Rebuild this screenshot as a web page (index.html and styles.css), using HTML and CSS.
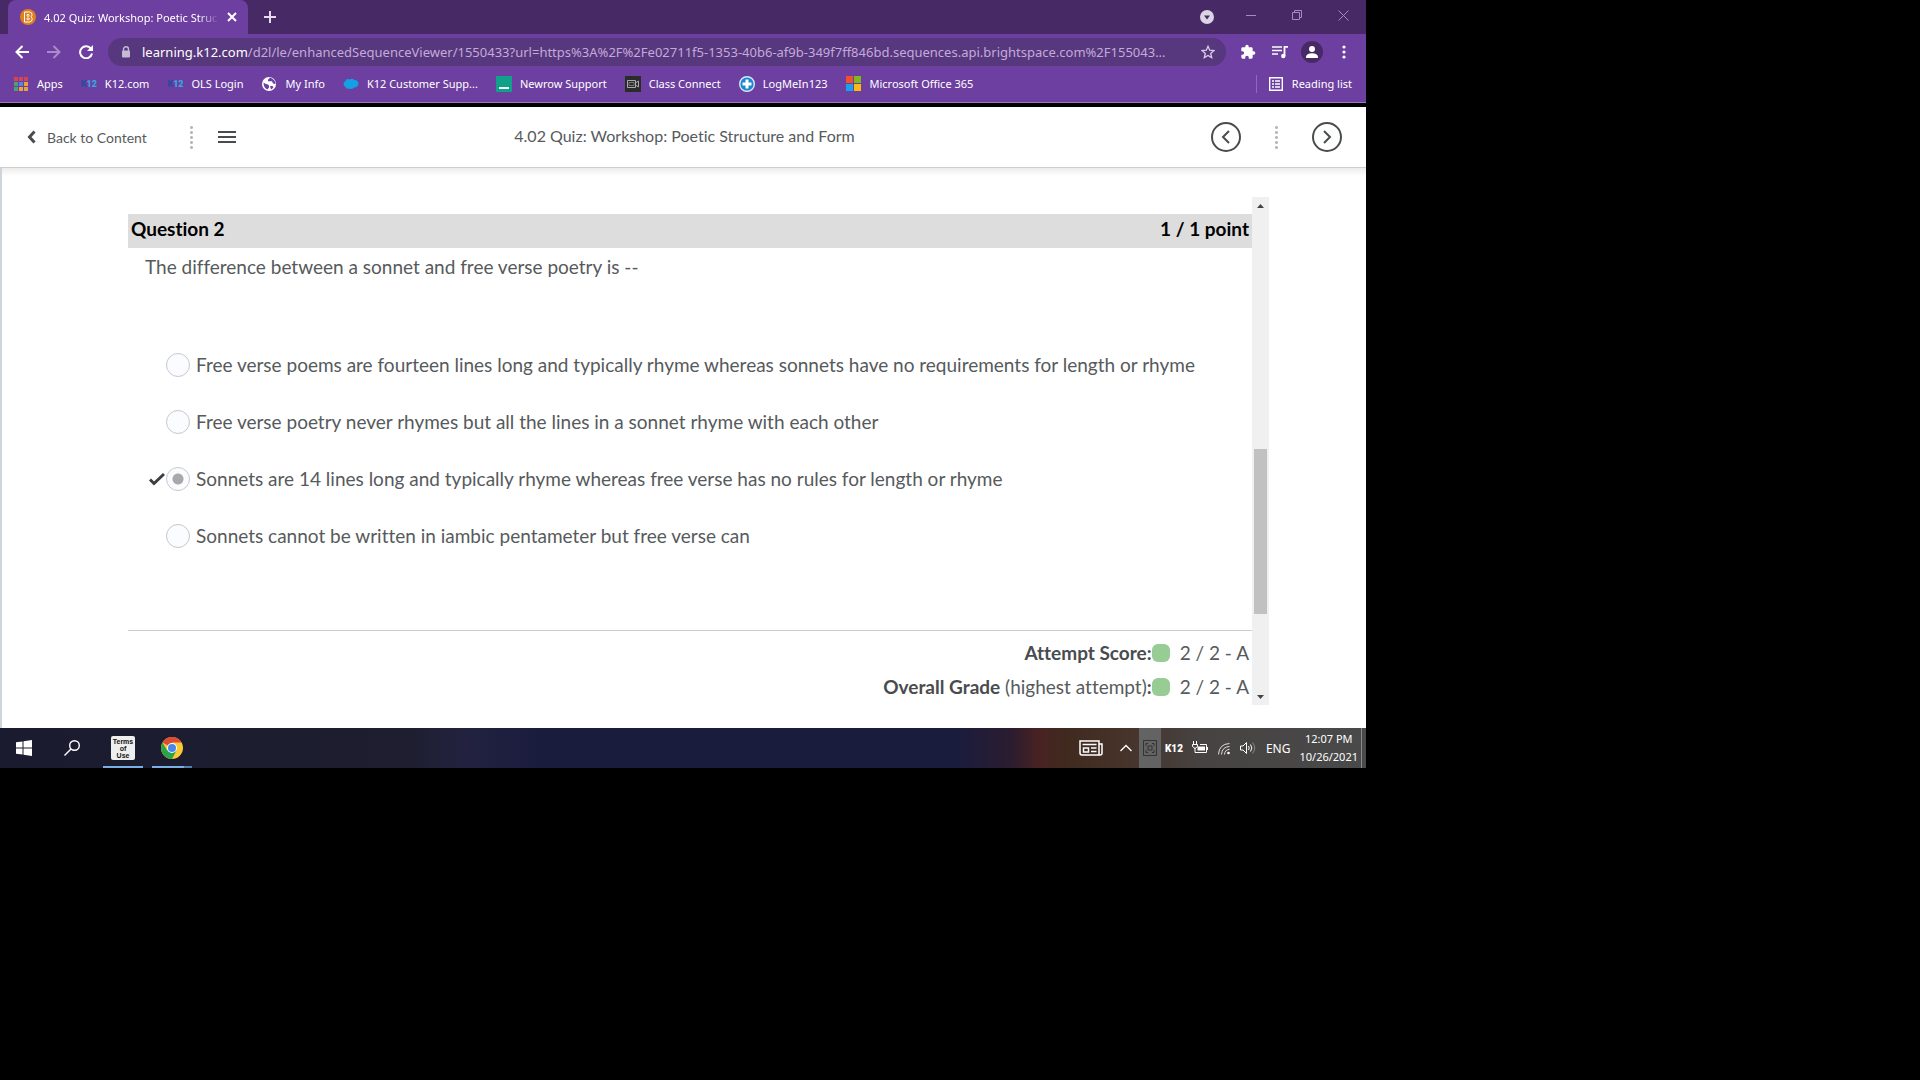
FILE: index.html
```html
<!DOCTYPE html>
<html lang="en">
<head>
  <meta charset="UTF-8">
  <meta name="viewport" content="width=device-width, initial-scale=1.0">
  <title>4.02 Quiz: Workshop: Poetic Structure and Form</title>
  <link rel="stylesheet" href="styles.css">
</head>
<body>
<div class="desktop">

  <!-- Browser chrome -->
  <div class="tabstrip">
    <div class="tab">
      <svg class="icon16" viewBox="0 0 16 16"><circle cx="8" cy="8" r="8" fill="#de801c"/><path d="M4.500 3h5q2.500.3 2.500 2.600 0 1.400-1 2.200 1.200.8 1.200 2.400-.2 2.500-2.700 2.800h-5z" fill="none" stroke="#fff"/><path d="M7 5.500h2v1.700H7zM7 9h2.200v1.700H7z" fill="none" stroke="#fff" stroke-width=".8"/></svg>
      <span class="tab-title">4.02 Quiz: Workshop: Poetic Struc</span>
      <button class="plain" aria-label="Close tab"><svg width="10" height="10" viewBox="0 0 10 10"><path d="M1 1l8 8M9 1L1 9" stroke="#fff" stroke-width="2"/></svg></button>
    </div>
    <button class="plain new-tab" aria-label="New tab"><svg width="12" height="12" viewBox="0 0 12 12"><path d="M6 0v12M0 6h12" stroke="#e5dcf0" stroke-width="2"/></svg></button>
    <div class="window-buttons">
      <button class="plain" aria-label="Search tabs"><svg width="14" height="14" viewBox="0 0 14 14"><circle cx="7" cy="7" r="7" fill="#dcd4e4"/><path d="M4 5.500h6L7 9.500z" fill="#472a65"/></svg></button>
      <button class="plain" aria-label="Minimize"><svg width="10" height="10" viewBox="0 0 10 10"><path d="M0 5.500h10" stroke="#a58bbf"/></svg></button>
      <button class="plain" aria-label="Restore"><svg width="10" height="10" viewBox="0 0 10 10"><path d="M.5 2.500h7v7h-7zM2.500 2.500v-2h7v7h-2" fill="none" stroke="#a58bbf"/></svg></button>
      <button class="plain" aria-label="Close"><svg width="11" height="11" viewBox="0 0 11 11"><path d="M.5.5l10 10M10.500.5l-10 10" stroke="#a58bbf"/></svg></button>
    </div>
  </div>

  <div class="toolbar">
    <button class="plain nav" aria-label="Back"><svg width="14" height="14" viewBox="0 0 14 14"><path d="M14 7H1.500M7.500 1L1.500 7l6 6" fill="none" stroke="#fff" stroke-width="2"/></svg></button>
    <button class="plain nav" aria-label="Forward"><svg width="14" height="14" viewBox="0 0 14 14"><path d="M0 7h12.500M6.500 1l6 6-6 6" fill="none" stroke="#a98acb" stroke-width="2"/></svg></button>
    <button class="plain nav" aria-label="Reload"><svg width="14" height="14" viewBox="0 0 14 14"><path d="M12 3.800A6 6 0 1 0 13 8.500" fill="none" stroke="#fff" stroke-width="2"/><path d="M14 0v6H8z" fill="#fff"/></svg></button>
    <div class="omnibox">
      <svg width="10" height="12" viewBox="0 0 10 12"><path d="M2.500 5V3.300a2.500 2.500 0 0 1 5 0V5" fill="none" stroke="#c6b9d4" stroke-width="1.400"/><rect x="1" y="4.500" width="8" height="7" rx="1" fill="#c6b9d4"/></svg>
      <span class="url"><b>learning.k12.com</b>/d2l/le/enhancedSequenceViewer/1550433?url=https%3A%2F%2Fe02711f5-1353-40b6-af9b-349f7ff846bd.sequences.api.brightspace.com%2F155043...</span>
      <button class="plain" aria-label="Bookmark this tab"><svg width="14" height="14" viewBox="0 0 14 14"><path d="M7 1.300l1.700 3.900 4.200.4-3.200 2.800 1 4.200L7 10.400l-3.700 2.200 1-4.200L1.100 5.600l4.200-.4z" fill="none" stroke="#d9cce6" stroke-width="1.300"/></svg></button>
    </div>
    <div class="actions">
      <button class="plain" aria-label="Extensions"><svg class="icon16" viewBox="0 0 24 24"><path fill="#fff" d="M20.500 11H19V7c0-1.100-.9-2-2-2h-4V3.500a2.500 2.500 0 0 0-5 0V5H4c-1.100 0-2 .9-2 2v3.800h1.500a2.700 2.700 0 0 1 0 5.400H2V20c0 1.100.9 2 2 2h3.800v-1.500a2.700 2.700 0 0 1 5.400 0V22H17c1.100 0 2-.9 2-2v-4h1.500a2.500 2.500 0 0 0 0-5z"/></svg></button>
      <button class="plain" aria-label="Media"><svg class="icon16" viewBox="0 0 16 16"><path d="M0 3h10M0 6.500h10M0 10h6" stroke="#fff" stroke-width="1.600"/><path d="M12.500 12V2.800H16" fill="none" stroke="#fff" stroke-width="1.800"/><circle cx="11.300" cy="12" r="2.200" fill="#fff"/></svg></button>
      <button class="plain" aria-label="Profile"><svg width="22" height="22" viewBox="0 0 22 22"><circle cx="11" cy="11" r="11" fill="#472a65"/><circle cx="11" cy="8" r="3" fill="#fff"/><path d="M5 17v-1.500Q5.500 12.500 11 12.300q5.500.2 6 3.200V17z" fill="#fff"/></svg></button>
      <button class="plain" aria-label="Menu"><svg width="4" height="14" viewBox="0 0 4 14"><circle cx="2" cy="2" r="1.600" fill="#fff"/><circle cx="2" cy="7" r="1.600" fill="#fff"/><circle cx="2" cy="12" r="1.600" fill="#fff"/></svg></button>
    </div>
  </div>

  <nav class="bookmarks">
    <a href="#"><svg class="icon16" viewBox="0 0 16 16"><path d="M1 1h4v4H1zM6 1h4v4H6zM11 1h4v4h-4z" fill="#d9434f"/><path d="M1 6h4v4H1z" fill="#4fa06c"/><path d="M6 6h4v4H6z" fill="#4a88e8"/><path d="M11 6h4v4h-4zM6 11h4v4H6zM11 11h4v4h-4z" fill="#e6a23c"/><path d="M1 11h4v4H1z" fill="#4fa06c"/><path d="M5.500 0v16M10.500 0v16M0 5.500h16M0 10.500h16" stroke="#6d3fa0"/></svg>Apps</a>
    <a href="#"><span class="k12-logo"><i>K</i>12</span>K12.com</a>
    <a href="#"><span class="k12-logo"><i>K</i>12</span>OLS Login</a>
    <a href="#"><svg class="icon16" viewBox="0 0 16 16"><circle cx="8" cy="8" r="7" fill="#fff"/><path d="M2.500 6.500q2 2 4 1.800l1.500 1.200v2l-1.500 2q-4-1.500-4-7zM9 1.500L7 3.700v1.500h4l1 2.300 2.500.5q0-4.500-5.500-6.500zM9 10h2.500l1 1.200q-1 1.500-2.500 2.300z" fill="#6d3fa0"/></svg>My Info</a>
    <a href="#"><svg class="icon16" viewBox="0 0 16 16"><path d="M2 5.500Q3.500 2 7 3.500 9.500 2 11 4q4-.5 4.500 3.500Q15 11.500 11 11.500 9 14 6.500 12.500 3 13.500 2.500 11 .5 10 .5 8T2 5.500z" fill="#14a0e4"/></svg>K12 Customer Supp...</a>
    <a href="#"><svg class="icon16" viewBox="0 0 16 16"><path d="M0 0h16v16H0z" fill="#11a089"/><path d="M3 12h10" stroke="#fff" stroke-width="2"/></svg>Newrow Support</a>
    <a href="#"><svg class="icon16" viewBox="0 0 16 16"><path d="M0 0h16v16H0z" fill="#2b2b2b"/><path d="M2.500 4.500h8v7h-8zM10.500 7l3-2v6l-3-2" fill="none" stroke="#aaa"/><path d="M4 6.500h5v3H4z" fill="none" stroke="#777"/></svg>Class Connect</a>
    <a href="#"><svg class="icon16" viewBox="0 0 16 16"><circle cx="8" cy="8" r="7.300" fill="#1c86d1" stroke="#d6ebfa" stroke-width="1.400"/><path d="M8 3.500v9M3.500 8h9" stroke="#fff" stroke-width="3"/></svg>LogMeIn123</a>
    <a href="#"><svg class="icon16" viewBox="0 0 16 16"><path d="M0 0h7v7H0z" fill="#f1502a"/><path d="M8 0h7v7H8z" fill="#7eba1c"/><path d="M0 8h7v7H0z" fill="#1ba0ee"/><path d="M8 8h7v7H8z" fill="#fdb90f"/></svg>Microsoft Office 365</a>
    <a href="#" class="reading-list"><svg class="icon16" viewBox="0 0 16 16"><path d="M1.700 1.700h12.600v12.600H1.700z" fill="none" stroke="#fff" stroke-width="1.400"/><path d="M4 5h2M4 8h2M4 11h2M7 5h5M7 8h5M7 11h5" stroke="#fff" stroke-width="1.400"/></svg>Reading list</a>
  </nav>

  <!-- Course viewer -->
  <header class="viewer-header">
    <div class="header-left">
      <a href="#" class="back"><svg width="9" height="14" viewBox="0 0 9 14"><path d="M7.500 1.500L2.500 7l5 5.500" fill="none" stroke="#494c4e" stroke-width="3"/></svg>Back to Content</a>
      <span class="dots"></span>
      <button class="plain" aria-label="Table of contents"><svg width="18" height="14" viewBox="0 0 18 14"><path d="M0 2h18M0 7h18M0 12h18" stroke="#494c4e" stroke-width="2"/></svg></button>
    </div>
    <h1>4.02 Quiz: Workshop: Poetic Structure and Form</h1>
    <div class="header-right">
      <button class="circle" aria-label="Previous"><svg width="10" height="14" viewBox="0 0 10 14"><path d="M8 1L2 7l6 6" fill="none" stroke="#494c4e" stroke-width="2"/></svg></button>
      <span class="dots"></span>
      <button class="circle" aria-label="Next"><svg width="10" height="14" viewBox="0 0 10 14"><path d="M2 1l6 6-6 6" fill="none" stroke="#494c4e" stroke-width="2"/></svg></button>
    </div>
  </header>

  <main class="viewer">
    <div class="quiz">
      <div class="question-bar"><h2>Question 2</h2><span>1 / 1 point</span></div>
      <form class="question">
        <p>The difference between a sonnet and free verse poetry is --</p>
        <ul>
          <li><label><input type="radio" name="answer">Free verse poems are fourteen lines long and typically rhyme whereas sonnets have no requirements for length or rhyme</label></li>
          <li><label><input type="radio" name="answer">Free verse poetry never rhymes but all the lines in a sonnet rhyme with each other</label></li>
          <li class="correct"><svg class="icon16" viewBox="0 0 16 16"><path d="M1 8.500l4 4L15 3" fill="none" stroke="#3b3e40" stroke-width="3"/></svg><label><input type="radio" name="answer" checked>Sonnets are 14 lines long and typically rhyme whereas free verse has no rules for length or rhyme</label></li>
          <li><label><input type="radio" name="answer">Sonnets cannot be written in iambic pentameter but free verse can</label></li>
        </ul>
      </form>
      <div class="scores">
        <div class="score"><b>Attempt Score:</b><i></i><span>2 / 2 - A</span></div>
        <div class="score"><b>Overall Grade</b>&nbsp;(highest attempt)<b>:</b><i></i><span>2 / 2 - A</span></div>
      </div>
    </div>
    <div class="scrollbar">
      <svg width="7" height="4" viewBox="0 0 7 4"><path d="M0 4L3.500 0 7 4z" fill="#444"/></svg>
      <div class="track"><div class="thumb"></div></div>
      <svg width="7" height="4" viewBox="0 0 7 4"><path d="M0 0h7L3.500 4z" fill="#444"/></svg>
    </div>
  </main>

  <!-- Windows taskbar -->
  <footer class="taskbar">
    <button class="task" aria-label="Start"><svg class="icon16" viewBox="0 0 16 16"><path d="M0 2.300L6.500 1.400v6.100H0zM7.500 1.200L16 0v7.500H7.500zM0 8.500h6.500v6.100L0 13.700zM7.500 8.500H16V16l-8.500-1.200z" fill="#fff"/></svg></button>
    <button class="task" aria-label="Search"><svg class="icon16" viewBox="0 0 16 16"><circle cx="10.500" cy="5.500" r="4.800" fill="none" stroke="#fff" stroke-width="1.400"/><path d="M7 9L.5 15.500" stroke="#fff" stroke-width="1.400"/></svg></button>
    <button class="task open"><span class="terms">Terms<br>of<br>Use</span></button>
    <button class="task open chrome" aria-label="Chrome"><svg width="22" height="22" viewBox="0 0 22 22"><circle cx="11" cy="11" r="11" fill="#fbc934"/><path d="M11 11L1.500 5.500A11 11 0 0 1 20.500 5.500H11z" fill="#dc4a38"/><path d="M1.500 5.500A11 11 0 0 0 11 22L15.500 13.500 11 11 6.200 13.500z" fill="#2ba24c"/><circle cx="11" cy="11" r="5" fill="#fff"/><circle cx="11" cy="11" r="4" fill="#4a86ee"/></svg></button>
    <div class="tray">
      <svg class="news" width="24" height="18" viewBox="0 0 24 18"><path d="M1 2h19v14H3q-2 0-2-2zM20 5h3v9q0 2-2 2h-2M3.500 5.500h14M12 9h5.500M12 12.500h5.500M4.500 9h5v4h-5z" fill="none" stroke="#fff" stroke-width="1.500"/></svg>
      <svg width="12" height="8" viewBox="0 0 12 8"><path d="M.5 7L6 1.500 11.500 7" fill="none" stroke="#fff" stroke-width="1.300"/></svg>
      <span class="tray-active"><svg width="14" height="16" viewBox="0 0 14 16"><path d="M.5.5h13v15H.5z" fill="none" stroke="#333"/><path d="M3 6V3.500h2M9 3.500h2V6M3 10v2.500h2M9 12.500h2V10M5 6h4v4H5z" fill="none" stroke="#333"/></svg></span>
      <span class="tray-k12">K12</span>
      <svg class="icon16" viewBox="0 0 16 16"><path d="M1.500 1v3M4.500 1v3M.5 4.500h5v2L3 8.500.5 6.500zM3 8v4.500h11.500v-8H8" fill="none" stroke="#fff"/><path d="M5.500 6.500h7.500v4H5.500z" fill="#fff"/><path d="M15.500 7v3" stroke="#fff"/></svg>
      <svg width="14" height="14" viewBox="0 0 14 14"><circle cx="11.500" cy="12" r="1.300" fill="#fff"/><path d="M7.500 13.500q.3-4.800 5-5.200M4.500 13.500Q5 5.800 12.500 5.500M1.500 13.500Q2 3 12.500 2.500" fill="none" stroke="#ddd"/></svg>
      <svg width="17" height="14" viewBox="0 0 17 14"><path d="M.5 5h2.500L6.500 1.500v11L3 9H.5zM8.500 5q1.500 2 0 4M10.500 3.500q2.800 3.500 0 7" fill="none" stroke="#fff"/><path d="M12.500 1.500q4.500 5.500 0 11" fill="none" stroke="#888"/></svg>
      <span class="lang">ENG</span>
      <time>12:07 PM<br>10/26/2021</time>
    </div>
  </footer>
</div>
</body>
</html>
```
FILE: styles.css
```css
* {
  box-sizing: border-box;
}
body {
  margin: 0;
  min-height: 100vh;
  background: #000;
  display: grid;
  grid-template-columns: 683fr 277fr;
  align-items: start;
  font-family: "Noto Sans", "Open Sans", sans-serif;
  font-size: 11px;
}
a {
  color: inherit;
  text-decoration: none;
}
svg {
  display: block;
  flex: none;
}
.icon16 {
  width: 16px;
  height: 16px;
}
.plain {
  display: flex;
  align-items: center;
  justify-content: center;
  padding: 0;
  border: 0;
  background: none;
}
.desktop {
  min-width: 0;
}

/* browser chrome */
.tabstrip {
  display: flex;
  height: 34px;
  padding-left: 8px;
  background: #472a65;
}
.tab {
  display: flex;
  align-items: center;
  gap: 8px;
  width: 240px;
  padding: 0 11px 0 12px;
  border-radius: 8px 8px 0 0;
  background: #6d3fa0;
  color: #fff;
}
.tab-title {
  flex: 1;
  white-space: nowrap;
  mask-image: linear-gradient(to right, #000 88%, transparent);
}
.new-tab {
  width: 44px;
}
.window-buttons {
  display: flex;
  margin-left: auto;
}
.window-buttons button {
  width: 46px;
  height: 30px;
}
.window-buttons button:first-child {
  width: 42px;
  height: 34px;
}
.toolbar {
  display: flex;
  align-items: center;
  height: 36px;
  padding: 0 6px;
  background: #6d3fa0;
}
.nav {
  width: 32px;
  height: 28px;
}
.omnibox {
  flex: 1;
  min-width: 0;
  display: flex;
  align-items: center;
  gap: 11px;
  height: 28px;
  margin-left: 6px;
  padding: 0 11px 0 13px;
  border-radius: 14px;
  background: #57377d;
}
.url {
  flex: 1;
  overflow: hidden;
  white-space: nowrap;
  font-size: 13px;
  color: #c3aadb;
}
.url b {
  font-weight: 400;
  color: #fff;
}
.actions {
  display: flex;
  padding-left: 6px;
}
.actions button {
  width: 32px;
  height: 28px;
}
.bookmarks {
  display: flex;
  align-items: center;
  gap: 18px;
  height: 33px;
  padding: 0 14px 5px 13px;
  border-bottom: 1px solid #9a7abb;
  background: #6d3fa0;
  color: #fff;
}
.bookmarks a {
  display: flex;
  align-items: center;
  gap: 8px;
  height: 18px;
  white-space: nowrap;
}
.bookmarks .reading-list {
  margin-left: auto;
  padding-left: 11px;
  border-left: 1px solid #9168bb;
}
.k12-logo {
  width: 16px;
  font: 900 9px Roboto, sans-serif;
  color: #35a8e0;
}
.k12-logo i {
  font-style: normal;
  color: #2c4a9c;
}

/* course viewer */
.viewer-header {
  display: grid;
  grid-template-columns: 1fr auto 1fr;
  align-items: center;
  height: 65px;
  padding: 0 24px 0 27px;
  border-top: 4px solid #000;
  border-bottom: 1px solid #cdcdcd;
  background: #fff;
  color: #565a5c;
  font-family: Lato, sans-serif;
  font-variant-ligatures: none;
}
.viewer-header h1 {
  margin: 0;
  padding-bottom: 3px;
  font-size: 16px;
  font-weight: 400;
}
.header-left,
.header-right {
  display: flex;
  align-items: center;
}
.header-left {
  gap: 25px;
}
.header-right {
  justify-content: flex-end;
  gap: 34px;
}
.back {
  display: flex;
  align-items: center;
  gap: 11px;
  margin-right: 18px;
  font-size: 14px;
}
.dots {
  width: 3px;
  height: 25px;
  background: radial-gradient(circle, #b5b8ba 1px, transparent 2px) 0 0 / 3px 5px;
}
.circle {
  display: flex;
  align-items: center;
  justify-content: center;
  width: 30px;
  height: 30px;
  padding: 0;
  border: 2px solid #494c4e;
  border-radius: 50%;
  background: #fff;
}
.viewer {
  display: flex;
  padding: 29px 97px 23px 126px;
  border-left: 2px solid #cdd5dc;
  background: linear-gradient(#ececec, #fff 8px);
  color: #565a5c;
  font-family: Lato, sans-serif;
  font-size: 19px;
  font-variant-ligatures: none;
  line-height: 24px;
}
.quiz {
  flex: 1;
  min-width: 0;
  padding-top: 17px;
}
.question-bar {
  display: flex;
  justify-content: space-between;
  height: 34px;
  padding: 3px;
  background: #ddd;
  color: #000;
  font-weight: 700;
}
.question-bar h2 {
  margin: 0;
  font-size: 19px;
}
.question {
  padding: 7px 0 82px 17px;
  border-bottom: 1px solid #cdcdcd;
}
.question p {
  margin: 0 0 74px;
}
.question ul {
  display: grid;
  gap: 33px;
  margin: 0;
  padding: 0;
  list-style: none;
}
.question li {
  display: flex;
  align-items: center;
  padding-left: 21px;
}
.question .correct {
  padding-left: 4px;
  gap: 1px;
}
.question label {
  display: flex;
  align-items: center;
  gap: 6px;
}
.question input {
  appearance: none;
  width: 24px;
  height: 24px;
  margin: 0;
  border: 1px solid #c6c8cc;
  border-radius: 50%;
  background: #fbfcff;
}
.question input:checked {
  background: radial-gradient(circle, #a9a9a9 5px, #fbfcff 6px);
}
.scores {
  display: grid;
  gap: 10px;
  padding: 10px 3px 6px 0;
}
.score {
  display: flex;
  align-items: center;
  justify-content: flex-end;
}
.score b {
  color: #494c4e;
}
.score i {
  width: 18px;
  height: 18px;
  margin-right: 10px;
  border-radius: 6px;
  background: #98cc95;
}
.scrollbar {
  display: flex;
  flex-direction: column;
  align-items: center;
  width: 17px;
  padding: 7px 2px 6px;
  background: #f0f0f0;
}
.track {
  flex: 1;
  width: 13px;
  padding: 241px 0 81px;
  display: flex;
}
.thumb {
  flex: 1;
  background: #c1c1c1;
}

/* taskbar */
.taskbar {
  display: flex;
  height: 40px;
  background: linear-gradient(to right, #1b1b30 0, #1e1e30 30%, #222240 34%, #1a1c3e 40%, #1a1c3e 70%, #2b1c30 74%, #482222 76%, #402a20 78%, #463228 82%, #464342 88%, #4a4a4a);
  color: #fff;
}
.task {
  display: flex;
  align-items: center;
  justify-content: center;
  width: 48px;
  padding: 0;
  border: 0;
  background: none;
}
.task.open {
  width: 40px;
  margin-left: 7px;
  padding-top: 2px;
  border-bottom: 2px solid #79b0e6;
}
.task.chrome {
  margin-left: 9px;
  border-image: linear-gradient(to right, #79b0e6 78%, #5580ae 78%) 2;
}
.terms {
  width: 24px;
  height: 24px;
  border-radius: 2px;
  background: #eee;
  color: #111;
  font: bold 7px/7px "Liberation Sans", sans-serif;
  padding-top: 2px;
}
.tray {
  display: flex;
  align-items: center;
  gap: 9px;
  margin-left: auto;
  padding-right: 4px;
}
.news {
  margin-right: 8px;
}
.tray-active {
  display: flex;
  align-items: center;
  justify-content: center;
  align-self: stretch;
  width: 22px;
  margin: 0 -5px 0 -2px;
  background: #636363;
}
.tray-k12 {
  font: 900 10px Roboto, sans-serif;
}
.lang {
  font-size: 12px;
}
time {
  align-self: stretch;
  padding: 2px 3px 0 0;
  border-right: 1px solid #8a8a8a;
  line-height: 18px;
  text-align: center;
}
```
